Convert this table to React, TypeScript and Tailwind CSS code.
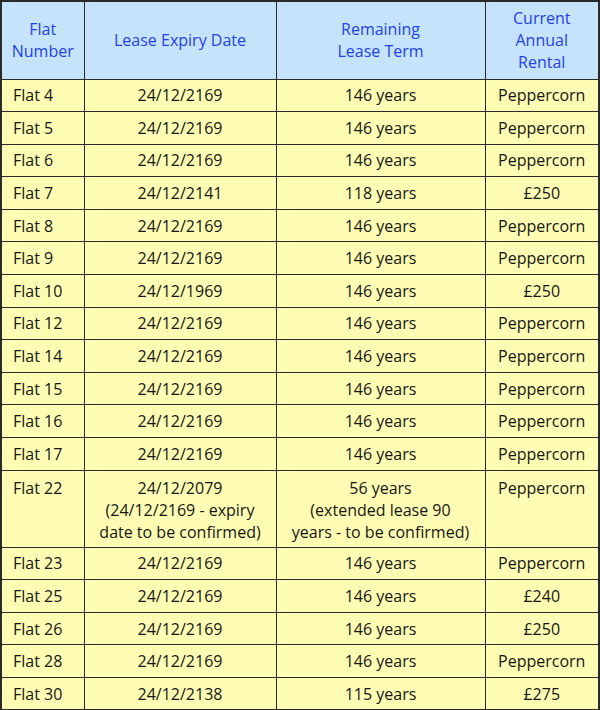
const rows: [string, string, string, string][] = [
  ['Flat 4', '24/12/2169', '146 years', 'Peppercorn'],
  ['Flat 5', '24/12/2169', '146 years', 'Peppercorn'],
  ['Flat 6', '24/12/2169', '146 years', 'Peppercorn'],
  ['Flat 7', '24/12/2141', '118 years', '£250'],
  ['Flat 8', '24/12/2169', '146 years', 'Peppercorn'],
  ['Flat 9', '24/12/2169', '146 years', 'Peppercorn'],
  ['Flat 10', '24/12/1969', '146 years', '£250'],
  ['Flat 12', '24/12/2169', '146 years', 'Peppercorn'],
  ['Flat 14', '24/12/2169', '146 years', 'Peppercorn'],
  ['Flat 15', '24/12/2169', '146 years', 'Peppercorn'],
  ['Flat 16', '24/12/2169', '146 years', 'Peppercorn'],
  ['Flat 17', '24/12/2169', '146 years', 'Peppercorn'],
]

const after: [string, string, string, string][] = [
  ['Flat 23', '24/12/2169', '146 years', 'Peppercorn'],
  ['Flat 25', '24/12/2169', '146 years', '£240'],
  ['Flat 26', '24/12/2169', '146 years', '£250'],
  ['Flat 28', '24/12/2169', '146 years', 'Peppercorn'],
  ['Flat 30', '24/12/2138', '115 years', '£275'],
]

const th = 'border border-[#2a2a2a] font-normal text-[#2440ee] text-center align-middle leading-[22px] px-1'
const td = 'border border-[#2a2a2a] h-[32.6px] p-0 align-middle'

function Row({ r }: { r: [string, string, string, string] }) {
  return (
    <tr className="bg-[#fefdb3]">
      <td className={`${td} pl-[11px]`}>{r[0]}</td>
      <td className={`${td} text-center`}>{r[1]}</td>
      <td className={`${td} text-center`}>{r[2]}</td>
      <td className={`${td} text-center`}>{r[3]}</td>
    </tr>
  )
}

export default function App() {
  return (
    <div className="w-[600px] h-[710px] overflow-hidden bg-white">
      <table
        className="border-collapse border-2 border-[#2a2a2a] table-fixed text-[16px] text-[#161616] leading-[22px]"
        style={{ fontFamily: '"Open Sans", "Noto Sans", sans-serif' }}
      >
        <colgroup>
          <col className="w-[83px]" />
          <col className="w-[192px]" />
          <col className="w-[209px]" />
          <col className="w-[114px]" />
        </colgroup>
        <thead>
          <tr className="bg-[#c5e4fb] h-[78px]">
            <th className={th}>
              Flat
              <br />
              Number
            </th>
            <th className={th}>Lease Expiry Date</th>
            <th className={th}>
              Remaining
              <br />
              Lease Term
            </th>
            <th className={th}>
              Current
              <br />
              Annual
              <br />
              Rental
            </th>
          </tr>
        </thead>
        <tbody>
          {rows.map((r) => (
            <Row key={r[0]} r={r} />
          ))}
          <tr className="bg-[#fefdb3] h-[77px]">
            <td className="border border-[#2a2a2a] align-top pl-[11px] pt-[6px]">Flat 22</td>
            <td className="border border-[#2a2a2a] align-top text-center pt-[6px]">
              24/12/2079
              <br />
              (24/12/2169 - expiry
              <br />
              date to be confirmed)
            </td>
            <td className="border border-[#2a2a2a] align-top text-center pt-[6px]">
              56 years
              <br />
              (extended lease 90
              <br />
              years - to be confirmed)
            </td>
            <td className="border border-[#2a2a2a] align-top text-center pt-[6px]">Peppercorn</td>
          </tr>
          {after.map((r) => (
            <Row key={r[0]} r={r} />
          ))}
        </tbody>
      </table>
    </div>
  )
}
